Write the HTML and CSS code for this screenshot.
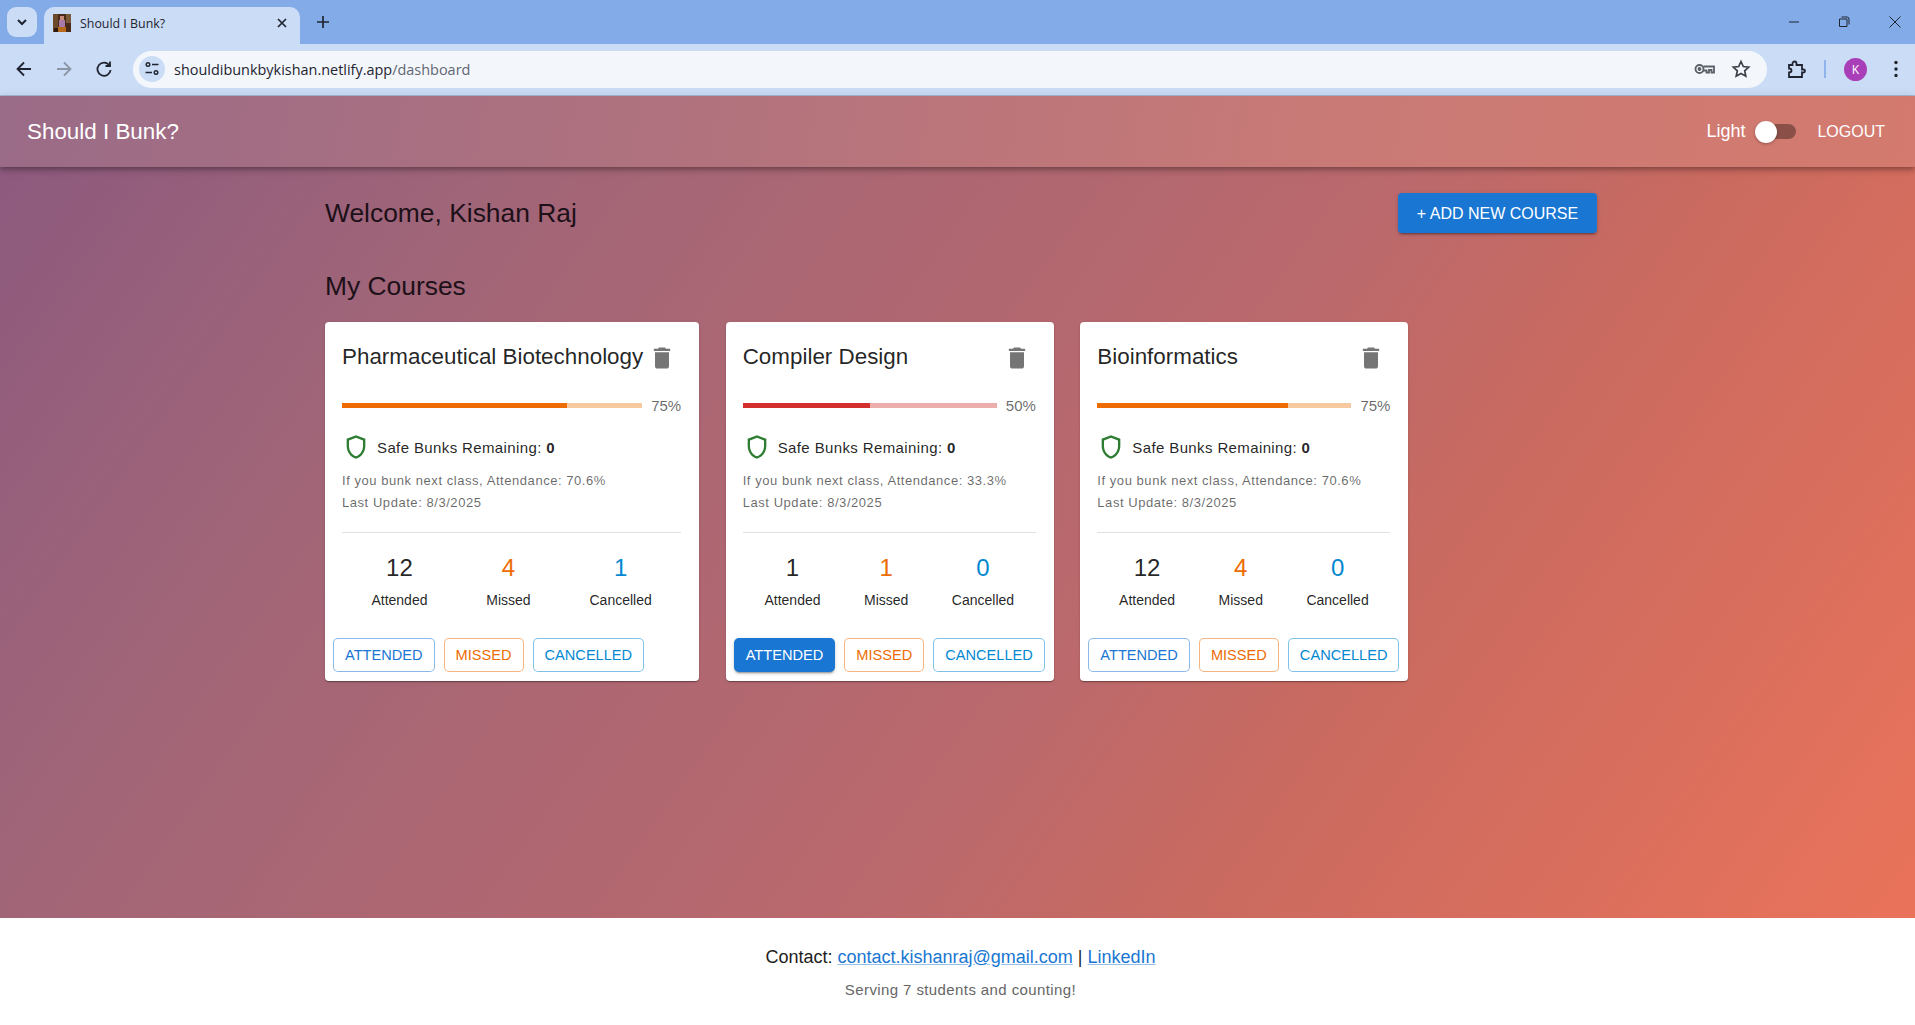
FILE: index.html
```html
<!DOCTYPE html>
<html lang="en">

<head>
    <meta charset="UTF-8">
    <meta name="viewport" content="width=device-width, initial-scale=1.0">
    <title>Should I Bunk?</title>
    <link rel="stylesheet" href="styles.css">
</head>

<body>
    <!-- browser window chrome -->
    <div class="tabstrip">
        <div class="tab-search">
            <svg width="16" height="16" viewBox="0 0 16 16"><path d="M4 6l4 4 4-4" fill="none" stroke="#1f2430" stroke-width="2"/></svg>
        </div>
        <div class="tab">
            <svg class="favicon" width="18" height="18" viewBox="0 0 18 18">
                <rect width="18" height="18" fill="#4a2a18"/>
                <rect x="0" y="0" width="5" height="18" fill="#6b4a2c"/>
                <rect x="13" y="0" width="5" height="9" fill="#7a5a38"/>
                <rect x="7" y="2" width="4" height="4" fill="#c98a7a"/>
                <rect x="6" y="6" width="6" height="7" fill="#a87aa8"/>
                <rect x="5" y="13" width="8" height="5" fill="#b86a1c"/>
                <rect x="1" y="14" width="4" height="4" fill="#2c1a10"/>
            </svg>
            <span class="tab-title">Should I Bunk?</span>
            <svg class="tab-close" width="12" height="12" viewBox="0 0 12 12"><path d="M2 2l8 8M10 2l-8 8" stroke="#1f2430" stroke-width="1.7"/></svg>
        </div>
        <svg class="tab-new" width="14" height="14" viewBox="0 0 14 14"><path d="M7 1v12M1 7h12" stroke="#1f2430" stroke-width="1.7"/></svg>
        <div class="win-controls">
            <svg width="12" height="12" viewBox="0 0 12 12"><path d="M1 6h10" stroke="#1f2430" stroke-width="1"/></svg>
            <svg width="12" height="12" viewBox="0 0 12 12"><path d="M3 3h6v7.500H1.500V3zM3.500 1h5.500q2 0 2 2v5.500" fill="none" stroke="#1f2430" stroke-width="1"/></svg>
            <svg width="14" height="14" viewBox="0 0 14 14"><path d="M1.500 1.500l11 11M12.500 1.500l-11 11" stroke="#1f2430" stroke-width="1"/></svg>
        </div>
    </div>
    <div class="toolbar">
        <svg class="nav-icon" width="20" height="20" viewBox="0 0 20 20"><path d="M17 10H4M10 3.500L3.500 10l6.500 6.500" fill="none" stroke="#1f2430" stroke-width="1.800"/></svg>
        <svg class="nav-icon" width="20" height="20" viewBox="0 0 20 20"><path d="M3 10h13M10 3.500l6.500 6.500-6.500 6.500" fill="none" stroke="#8d96a6" stroke-width="1.800"/></svg>
        <svg class="nav-icon" width="20" height="20" viewBox="0 0 20 20"><path d="M15.500 6.500A6.600 6.600 0 1 0 16.600 11M16 2.500V7h-4.500" fill="none" stroke="#1f2430" stroke-width="1.800"/></svg>
        <div class="omnibox">
            <span class="site-info">
                <svg width="16" height="16" viewBox="0 0 16 16" fill="none" stroke="#1f2430" stroke-width="1.400"><circle cx="4" cy="3.500" r="1.800"/><path d="M8 3.500h6.500M1.500 11.500H8"/><circle cx="12" cy="11.500" r="1.800"/></svg>
            </span>
            <span class="url">shouldibunkbykishan.netlify.app<span class="url-path">/dashboard</span></span>
            <svg class="omni-key" width="21" height="14" viewBox="0 0 21 14" fill="none" stroke="#5a5f68" stroke-width="1.800"><circle cx="5.500" cy="7" r="4"/><circle cx="5.500" cy="7" r="1" fill="#5a5f68"/><path d="M9.500 4.500H20v6h-2.500V8H15v2.500h-2.500V8.500H9"/></svg>
            <svg class="omni-star" width="20" height="20" viewBox="0 0 20 20"><path d="M10 2.500l2.300 5 5.400.6-4 3.700 1.100 5.400-4.800-2.700-4.800 2.700 1.100-5.400-4-3.700 5.400-.6z" fill="none" stroke="#3c4048" stroke-width="1.700"/></svg>
        </div>
        <svg class="puzzle" width="20" height="20" viewBox="0 0 20 20"><path d="M3 6h3.500V4.500a2 2 0 0 1 4 0V6H16v4.500h1.500a1.500 1.500 0 0 1 0 3H16V18H3v-4.500q2.500 0 2.500-2T3 9.500z" fill="none" stroke="#1f2430" stroke-width="1.800"/></svg>
        <span class="toolbar-sep"></span>
        <span class="avatar">K</span>
        <svg class="more" width="6" height="20" viewBox="0 0 6 20" fill="#1f2430"><circle cx="3" cy="3.500" r="1.700"/><circle cx="3" cy="10" r="1.700"/><circle cx="3" cy="16.500" r="1.700"/></svg>
    </div>

    <header class="appbar">
        <div class="brand">Should I Bunk?</div>
        <div class="appbar-right">
            <span class="mode-label">Light</span>
            <span class="switch"><span class="switch-thumb"></span></span>
            <a class="logout">LOGOUT</a>
        </div>
    </header>

    <main class="page">
        <div class="welcome-row">
            <h1 class="welcome">Welcome, Kishan Raj</h1>
            <button class="add-btn">+ ADD NEW COURSE</button>
        </div>
        <h2 class="section-title">My Courses</h2>

        <div class="course-list">
            <div class="course-card">
                <div class="card-head">
                    <span class="course-name">Pharmaceutical Biotechnology</span>
                    <svg class="trash" viewBox="0 0 24 24"><path d="M6 19c0 1.100.9 2 2 2h8c1.100 0 2-.9 2-2V7H6v12zM19 4h-3.500l-1-1h-5l-1 1H5v2h14V4z"/></svg>
                </div>
                <div class="progress-row">
                    <div class="bar bar-warn"><div class="bar-fill" style="width: 75%"></div></div>
                    <span class="pct">75%</span>
                </div>
                <div class="safe-row">
                    <svg class="shield" viewBox="0 0 24 24"><path d="M12 2 4 5v6.090c0 5.050 3.410 9.760 8 10.910 4.590-1.150 8-5.860 8-10.910V5l-8-3zm6 9.090c0 4-2.550 7.700-6 8.830-3.450-1.130-6-4.820-6-8.830v-4.700l6-2.250 6 2.250v4.700z"/></svg>
                    <span>Safe Bunks Remaining: <b>0</b></span>
                </div>
                <p class="note">If you bunk next class, Attendance: 70.6%</p>
                <p class="note">Last Update: 8/3/2025</p>
                <hr class="divider">
                <div class="stats">
                    <div class="stat"><div class="stat-num">12</div><div class="stat-label">Attended</div></div>
                    <div class="stat"><div class="stat-num orange">4</div><div class="stat-label">Missed</div></div>
                    <div class="stat"><div class="stat-num blue">1</div><div class="stat-label">Cancelled</div></div>
                </div>
                <div class="actions">
                    <button class="btn btn-primary">Attended</button>
                    <button class="btn btn-warn">Missed</button>
                    <button class="btn btn-info">Cancelled</button>
                </div>
            </div>

            <div class="course-card">
                <div class="card-head">
                    <span class="course-name">Compiler Design</span>
                    <svg class="trash" viewBox="0 0 24 24"><path d="M6 19c0 1.100.9 2 2 2h8c1.100 0 2-.9 2-2V7H6v12zM19 4h-3.500l-1-1h-5l-1 1H5v2h14V4z"/></svg>
                </div>
                <div class="progress-row">
                    <div class="bar bar-danger"><div class="bar-fill" style="width: 50%"></div></div>
                    <span class="pct">50%</span>
                </div>
                <div class="safe-row">
                    <svg class="shield" viewBox="0 0 24 24"><path d="M12 2 4 5v6.090c0 5.050 3.410 9.760 8 10.910 4.590-1.150 8-5.860 8-10.910V5l-8-3zm6 9.090c0 4-2.550 7.700-6 8.830-3.450-1.130-6-4.820-6-8.830v-4.700l6-2.250 6 2.250v4.700z"/></svg>
                    <span>Safe Bunks Remaining: <b>0</b></span>
                </div>
                <p class="note">If you bunk next class, Attendance: 33.3%</p>
                <p class="note">Last Update: 8/3/2025</p>
                <hr class="divider">
                <div class="stats">
                    <div class="stat"><div class="stat-num">1</div><div class="stat-label">Attended</div></div>
                    <div class="stat"><div class="stat-num orange">1</div><div class="stat-label">Missed</div></div>
                    <div class="stat"><div class="stat-num blue">0</div><div class="stat-label">Cancelled</div></div>
                </div>
                <div class="actions">
                    <button class="btn btn-primary btn-filled">Attended</button>
                    <button class="btn btn-warn">Missed</button>
                    <button class="btn btn-info">Cancelled</button>
                </div>
            </div>

            <div class="course-card">
                <div class="card-head">
                    <span class="course-name">Bioinformatics</span>
                    <svg class="trash" viewBox="0 0 24 24"><path d="M6 19c0 1.100.9 2 2 2h8c1.100 0 2-.9 2-2V7H6v12zM19 4h-3.500l-1-1h-5l-1 1H5v2h14V4z"/></svg>
                </div>
                <div class="progress-row">
                    <div class="bar bar-warn"><div class="bar-fill" style="width: 75%"></div></div>
                    <span class="pct">75%</span>
                </div>
                <div class="safe-row">
                    <svg class="shield" viewBox="0 0 24 24"><path d="M12 2 4 5v6.090c0 5.050 3.410 9.760 8 10.910 4.590-1.150 8-5.860 8-10.910V5l-8-3zm6 9.090c0 4-2.550 7.700-6 8.830-3.450-1.130-6-4.820-6-8.830v-4.700l6-2.250 6 2.250v4.700z"/></svg>
                    <span>Safe Bunks Remaining: <b>0</b></span>
                </div>
                <p class="note">If you bunk next class, Attendance: 70.6%</p>
                <p class="note">Last Update: 8/3/2025</p>
                <hr class="divider">
                <div class="stats">
                    <div class="stat"><div class="stat-num">12</div><div class="stat-label">Attended</div></div>
                    <div class="stat"><div class="stat-num orange">4</div><div class="stat-label">Missed</div></div>
                    <div class="stat"><div class="stat-num blue">0</div><div class="stat-label">Cancelled</div></div>
                </div>
                <div class="actions">
                    <button class="btn btn-primary">Attended</button>
                    <button class="btn btn-warn">Missed</button>
                    <button class="btn btn-info">Cancelled</button>
                </div>
            </div>
        </div>
    </main>

    <footer class="site-footer">
        <p class="contact">Contact: <a href="#">contact.kishanraj@gmail.com</a> | <a href="#">LinkedIn</a></p>
        <p class="serving">Serving 7 students and counting!</p>
    </footer>
</body>

</html>
```

FILE: styles.css
```css
* {
    box-sizing: border-box;
}

html,
body {
    margin: 0;
    height: 100%;
}

body {
    display: flex;
    flex-direction: column;
    height: 1025px;
    overflow: hidden;
    font-family: 'Liberation Sans', Arial, sans-serif;
    color: rgba(0, 0, 0, 0.87);
}

/* browser chrome */
.tabstrip {
    display: flex;
    align-items: flex-end;
    height: 44px;
    padding-left: 7px;
    background: #83abe8;
    position: relative;
}

.tab-search {
    width: 30px;
    height: 30px;
    margin-bottom: 7px;
    border-radius: 9px;
    background: #cbdcf6;
    display: flex;
    align-items: center;
    justify-content: center;
}

.tab {
    display: flex;
    align-items: center;
    width: 256px;
    height: 37px;
    margin-left: 7px;
    padding: 0 12px 5px 9px;
    border-radius: 10px 10px 0 0;
    background: #cbdcf6;
}

.tab-title {
    flex: 1;
    margin-left: 9px;
    font: 12.400px 'Open Sans', sans-serif;
    color: #1f2430;
}

.tab-new {
    margin: 0 0 15px 16px;
}

.win-controls {
    display: flex;
    align-items: center;
    gap: 38px;
    position: absolute;
    right: 13px;
    top: 15px;
}

.toolbar {
    display: flex;
    align-items: center;
    height: 52px;
    padding: 0 16px 1px 14px;
    background: #cbdcf6;
    border-bottom: 1px solid #a9b9d6;
}

.nav-icon {
    margin-right: 20px;
}

.omnibox {
    display: flex;
    align-items: center;
    flex: 1;
    height: 37px;
    margin-left: -1px;
    padding: 0 16px 0 6px;
    border-radius: 19px;
    background: #f3f7fc;
}

.site-info {
    display: flex;
    align-items: center;
    justify-content: center;
    width: 26px;
    height: 26px;
    border-radius: 50%;
    background: #cbdcf6;
}

.url {
    flex: 1;
    margin-left: 9px;
    font: 14.450px 'Open Sans', sans-serif;
    color: #1f2430;
}

.url-path {
    color: #5f6672;
}

.omni-star {
    margin-left: 16px;
}

.puzzle {
    margin-left: 19px;
}

.toolbar-sep {
    width: 2px;
    height: 18px;
    margin-left: 18px;
    background: #8fb3ea;
}

.avatar {
    width: 23px;
    height: 23px;
    margin-left: 18px;
    border-radius: 50%;
    background: #a83fb8;
    color: #fff;
    font: 12px/23px 'Open Sans', sans-serif;
    text-align: center;
}

.more {
    margin-left: 26px;
}

/* app */
.appbar {
    display: flex;
    align-items: center;
    justify-content: space-between;
    height: 71px;
    padding: 0 30px 0 27px;
    background: linear-gradient(100deg, #9a6b87, #b0727e 35%, #c97a76 70%, #d47a6e);
    box-shadow: 0 2px 4px -1px rgba(0, 0, 0, 0.2), 0 4px 5px rgba(0, 0, 0, 0.14), 0 1px 10px rgba(0, 0, 0, 0.12);
    color: #fff;
    position: relative;
    z-index: 1;
}

.brand {
    font-size: 22.400px;
}

.appbar-right {
    display: flex;
    align-items: center;
}

.mode-label {
    font-size: 18px;
}

.switch {
    display: block;
    width: 41px;
    height: 15px;
    margin: 0 21px 0 10px;
    border-radius: 8px;
    background: #8a5048;
    position: relative;
}

.switch-thumb {
    position: absolute;
    left: 0;
    top: -3.500px;
    width: 22px;
    height: 22px;
    border-radius: 50%;
    background: #fff;
    box-shadow: 0 1px 3px rgba(0, 0, 0, 0.3);
}

.logout {
    font-size: 16px;
}

.page {
    flex: 1;
    padding: 26px 0 0 325px;
    background: linear-gradient(125deg, #8d5a7e 0%, #a06578 20%, #bb696c 58%, #c96a60 70%, #ea735a 100%);
}

.welcome-row {
    display: flex;
    align-items: center;
    justify-content: space-between;
    width: 1272px;
    height: 40px;
}

.welcome,
.section-title {
    margin: 0;
    font-size: 26.400px;
    font-weight: 400;
    color: #1d1018;
}

.add-btn {
    width: 199px;
    height: 40px;
    padding-top: 2px;
    border: 0;
    border-radius: 4px;
    background: #1976d2;
    color: #fff;
    font: 400 16px 'Liberation Sans', sans-serif;
    box-shadow: 0 3px 1px -2px rgba(0, 0, 0, 0.2), 0 2px 2px rgba(0, 0, 0, 0.14), 0 1px 5px rgba(0, 0, 0, 0.12);
}

.section-title {
    margin-top: 37px;
    line-height: 32px;
}

.course-list {
    display: flex;
    align-items: flex-start;
    gap: 26.500px;
    margin-top: 20px;
}

.course-card {
    height: 359px;
    padding: 17px 9px 0 8px;
    border-radius: 4px;
    background: #fff;
    box-shadow: 0 2px 1px -1px rgba(0, 0, 0, 0.2), 0 1px 1px rgba(0, 0, 0, 0.14), 0 1px 3px rgba(0, 0, 0, 0.12);
}

.card-head {
    display: flex;
    align-items: center;
    justify-content: space-between;
    height: 38px;
    padding-left: 9px;
}

.course-name {
    margin-top: -2px;
    font-size: 22.400px;
    white-space: nowrap;
}

.trash {
    width: 28px;
    height: 28px;
    margin: 0 14px 0 5px;
    fill: #757575;
}

.progress-row {
    display: flex;
    align-items: center;
    margin: 22px 9px 0 9px;
    height: 12px;
}

.bar {
    flex: 1;
    height: 5px;
}

.bar-fill {
    height: 100%;
}

.bar-warn {
    background: #f7c9a0;
}

.bar-warn .bar-fill {
    background: #ed6c02;
}

.bar-danger {
    background: #eeadad;
}

.bar-danger .bar-fill {
    background: #d32f2f;
}

.pct {
    margin: 1px 0 0 9px;
    font-size: 15px;
    color: rgba(0, 0, 0, 0.6);
}

.safe-row {
    display: flex;
    align-items: center;
    margin: 21px 0 8px 9px;
    height: 30px;
    font-size: 15px;
    letter-spacing: 0.38px;
}

.shield {
    width: 28px;
    height: 28px;
    margin-right: 7px;
    fill: #2e7d32;
    flex: none;
}

.note {
    margin: 0 0 0 9px;
    font-size: 13px;
    line-height: 22px;
    letter-spacing: 0.55px;
    color: rgba(0, 0, 0, 0.6);
    white-space: nowrap;
}

.divider {
    margin: 18px 9px 0 9px;
    border: 0;
    border-top: 1px solid #e0e0e0;
}

.stats {
    display: flex;
    justify-content: space-around;
    margin: 19px 9px 0 9px;
    text-align: center;
}

.stat-num {
    font-size: 24px;
    line-height: 32px;
}

.stat-label {
    margin-top: 4px;
    font-size: 14px;
    line-height: 24px;
}

.orange {
    color: #ed6c02;
}

.blue {
    color: #0288d1;
}

.actions {
    display: flex;
    gap: 9px;
    margin-top: 26px;
}

.btn {
    height: 34px;
    padding: 0 11px;
    border: 1px solid;
    border-radius: 5px;
    background: #fff;
    font: 400 14.600px 'Liberation Sans', sans-serif;
    text-transform: uppercase;
}

.btn-primary {
    color: #1976d2;
    border-color: rgba(25, 118, 210, 0.5);
}

.btn-filled {
    background: #1976d2;
    color: #fff;
    box-shadow: 0 3px 1px -2px rgba(0, 0, 0, 0.2), 0 2px 2px rgba(0, 0, 0, 0.14), 0 1px 5px rgba(0, 0, 0, 0.12);
}

.btn-warn {
    color: #ed6c02;
    border-color: rgba(237, 108, 2, 0.5);
}

.btn-info {
    color: #0288d1;
    border-color: rgba(2, 136, 209, 0.5);
}

.site-footer {
    height: 107px;
    padding: 27px 0 0 6px;
    background: #fff;
    text-align: center;
}

.contact {
    margin: 0;
    font-size: 18px;
    line-height: 24px;
    color: #1d1d1d;
}

.contact a {
    color: #1976d2;
    text-decoration-color: rgba(25, 118, 210, 0.45);
}

.serving {
    margin: 11px 0 0;
    font-size: 15px;
    line-height: 20px;
    letter-spacing: 0.4px;
    color: #666;
}
```
